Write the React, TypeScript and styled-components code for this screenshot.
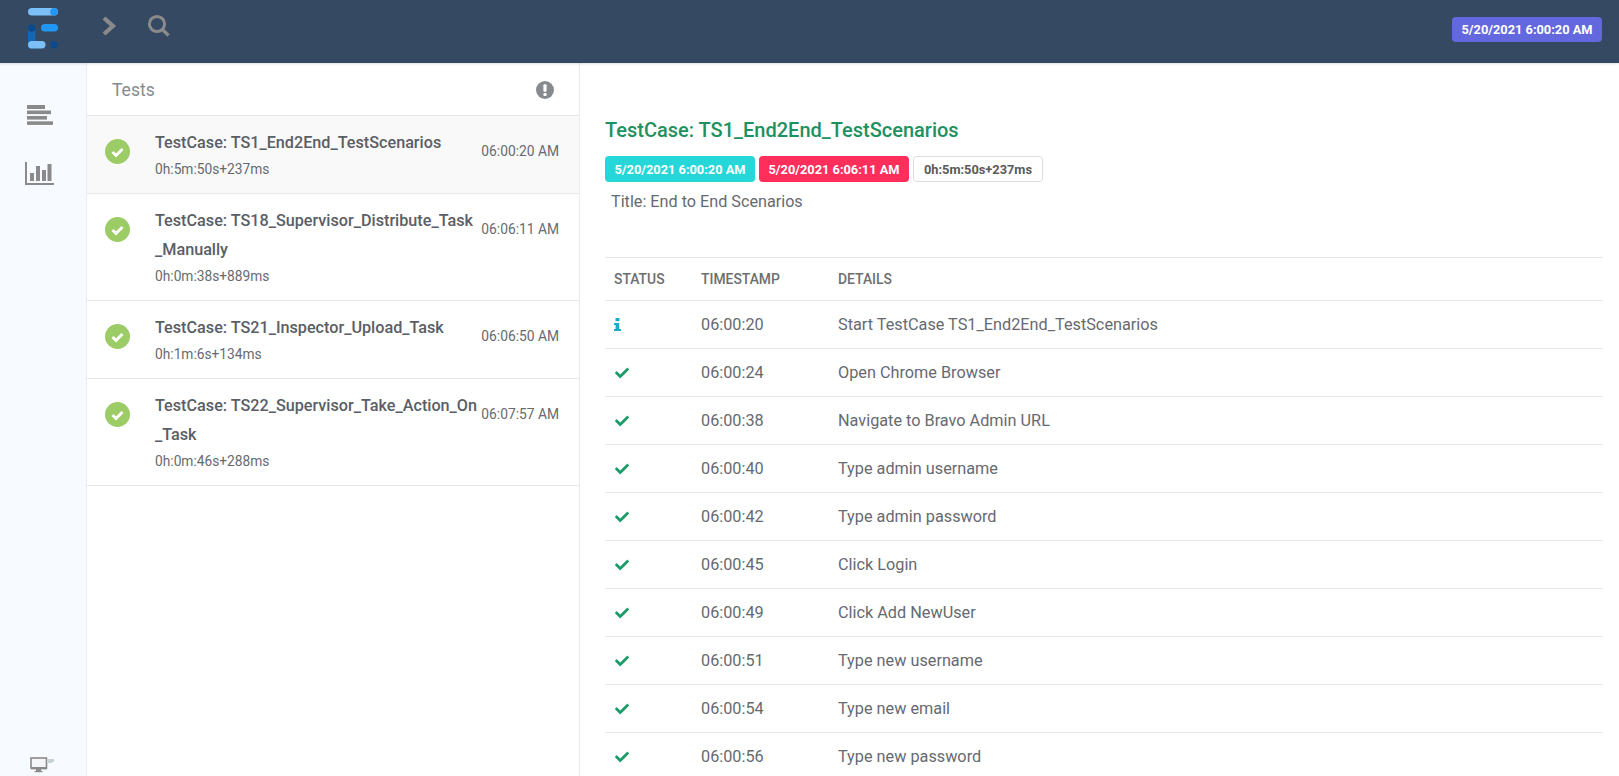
import React from 'react';
import styled, { createGlobalStyle } from 'styled-components';
import { FaCheck } from 'react-icons/fa';

const Global = createGlobalStyle`
  html, body { margin: 0; padding: 0; height: 100%; overflow: hidden; background: #fff; }
  body { font-family: Roboto, "Liberation Sans", sans-serif; color: #5a5a5a; font-size: 14px; }
  * { box-sizing: border-box; }
`;

const Page = styled.div`display: flex; flex-direction: column; height: 776px; overflow: hidden;`;
const TopBar = styled.header`
  height: 63px; flex: none; background: #354a62; display: flex; align-items: flex-start;
  box-shadow: 0 1px 2px rgba(0,0,0,.12); position: relative; z-index: 2;
`;
const LogoSlot = styled.div`width: 86px; padding: 8px 0 0 28px; flex: none;`;
const NavIcons = styled.div`display: flex; align-items: center; gap: 30px; padding: 14px 0 0 15px;`;
const Spacer = styled.div`flex: 1;`;
const DateBadge = styled.span`
  margin: 17px 17px 0 0; height: 25px; width: 150px; border-radius: 4px; background: #6368de; color: #fff;
  font-size: 12.8px; font-weight: 700; display: flex; align-items: center; justify-content: center;
`;
const Body = styled.div`display: flex; flex: 1; min-height: 0;`;
const SideNav = styled.nav`
  width: 87px; flex: none; background: #f7faff; border-right: 1px solid #e6ebf1;
  display: flex; flex-direction: column; align-items: center; padding: 42px 0 0 0;
`;
const SideItem = styled.div`height: 57px; width: 100%; padding-left: 27px; flex: none;`;
const ChartItem = styled(SideItem)`padding-left: 25px;`;
const SideBottom = styled.div`margin-top: auto; padding: 0 2px 0 0; height: 19px;`;
const ListPane = styled.section`width: 493px; flex: none; border-right: 1px solid #e6ebf1;`;
const ListHead = styled.div`
  height: 53px; border-bottom: 1px solid #e6e9ec; display: flex; align-items: center; justify-content: space-between;
  padding: 2px 25px 0 25px; color: #868a8e; font-size: 17.5px;
`;
const Row = styled.div<{ $active?: boolean; $h: number }>`
  display: flex; align-items: flex-start; border-bottom: 1px solid #e6e9ec; padding: 12px 20px 0 18px;
  height: ${p => p.$h}px; background: ${p => (p.$active ? '#f9f9f9' : '#fff')};
`;
const IconCell = styled.div`width: 50px; flex: none; padding-top: 11px; line-height: 0;`;
const Info = styled.div`flex: 1; min-width: 0;`;
const RowTitle = styled.div`font-size: 16.2px; font-weight: 500; line-height: 29px; color: #5a5e66; width: 324px; word-break: break-all;`;
const RowSub = styled.div`font-size: 13.75px; line-height: 20px; color: #666a70; margin-top: 2px;`;
const RowTime = styled.div`flex: none; font-size: 13.8px; line-height: 20px; color: #666a70; margin-top: 13px;`;
const Detail = styled.main`flex: 1; min-width: 0; padding: 54px 16px 0 25px;`;
const Heading = styled.h1`margin: 0; font-size: 20px; font-weight: 500; line-height: 26px; color: #1d9160;`;
const Badges = styled.div`display: flex; gap: 4px; margin-top: 13px;`;
const Badge = styled.span<{ $bg?: string }>`
  height: 26px; padding: 0 ${p => (p.$bg ? '9.5px' : '10px')}; border-radius: 4px; font-size: 12.8px; font-weight: 700;
  display: flex; align-items: center;
  background: ${p => p.$bg ?? '#fff'}; color: ${p => (p.$bg ? '#fff' : '#5a5a5a')};
  border: ${p => (p.$bg ? 'none' : '1px solid #ddd')};
`;
const SubTitle = styled.div`font-size: 16.2px; line-height: 20px; margin: 10px 0 0 6px; color: #666a70;`;
const Table = styled.div`margin-top: 45px; border-top: 1px solid #e6e9ec;`;
const Grid = styled.div<{ $head?: boolean }>`
  display: grid; grid-template-columns: 87px 137px 1fr; align-items: center; padding-left: 9px;
  height: ${p => (p.$head ? 43 : 48)}px; border-bottom: 1px solid #e6e9ec;
  font-size: ${p => (p.$head ? '13.9px' : '16.25px')}; font-weight: ${p => (p.$head ? 500 : 400)};
  color: ${p => (p.$head ? '#6e6e6e' : '#666a70')};
`;
const StatusIcon = styled.span`display: flex; align-items: center; color: #1d9c6c;`;
const PassTick = styled(FaCheck)`margin-left: 1px;`;

const Logo = () => (
  <svg width="32" height="42" viewBox="0 0 32 42">
    <rect x="0" y="0" width="30" height="7.5" rx="3.75" fill="#7dc0f8" />
    <circle cx="26" cy="3.75" r="3.75" fill="#2196f3" />
    <rect x="0" y="17" width="7.5" height="24" rx="3.75" fill="#1565b0" />
    <circle cx="3.75" cy="20" r="3.75" fill="#0d4a8c" />
    <rect x="13" y="16" width="17" height="7.5" rx="3.75" fill="#2196f3" />
    <rect x="0" y="33" width="17.5" height="7.5" rx="3.75" fill="#7dc0f8" />
    <circle cx="26" cy="36.7" r="3.75" fill="#0d4a8c" />
  </svg>
);
const Chevron = () => (
  <svg width="16" height="22" viewBox="0 0 16 22"><path d="M3 3l9 8-9 8" fill="none" stroke="#8a8a8a" strokeWidth="4.2" /></svg>
);
const Search = () => (
  <svg width="24" height="24" viewBox="0 0 24 24"><circle cx="10" cy="10" r="7.6" fill="none" stroke="#8a8a8a" strokeWidth="3" /><path d="M15.5 15.5l6 6" stroke="#8a8a8a" strokeWidth="3.4" /></svg>
);
const Bars = () => (
  <svg width="26" height="20" viewBox="0 0 26 20" fill="#8a8a8a">
    <rect y="0" width="18" height="4" /><rect y="5.5" width="24" height="3.6" /><rect y="11" width="20" height="3.6" /><rect y="16.3" width="26" height="3.6" />
  </svg>
);
const Chart = () => (
  <svg width="30" height="24" viewBox="0 0 30 24" fill="#8a8a8a">
    <rect x="0" y="0" width="2" height="23" /><rect x="0" y="21" width="29" height="2" />
    <rect x="5" y="11" width="4" height="8" /><rect x="11" y="4" width="4" height="15" /><rect x="17" y="8" width="4" height="11" /><rect x="22.5" y="2" width="4" height="17" />
  </svg>
);
const Monitor = () => (
  <svg width="24" height="17" viewBox="0 0 24 17">
    <rect x="1" y="1" width="15.5" height="10" fill="#f3f5f8" stroke="#8a8a8a" strokeWidth="1.6" />
    <rect x="1" y="10" width="16" height="2.4" fill="#8a8a8a" /><rect x="6" y="12" width="5" height="2.6" fill="#8a8a8a" /><rect x="4.5" y="14" width="8" height="1.2" fill="#8a8a8a" />
    <rect x="18.5" y="2" width="1" height="4" fill="#9aa" /><rect x="20.5" y="2" width="1" height="4" fill="#9aa" /><rect x="22.5" y="2" width="1" height="3" fill="#9aa" />
  </svg>
);
const Alert = () => (
  <svg width="18" height="18" viewBox="0 0 18 18"><circle cx="9" cy="9" r="9" fill="#868a8e" /><rect x="7.4" y="3.2" width="3.2" height="7.6" rx="1" fill="#fff" /><rect x="7.4" y="12" width="3.2" height="3" rx="1" fill="#fff" /></svg>
);
const PassCircle = () => (
  <svg width="25" height="25" viewBox="0 0 25 25"><circle cx="12.5" cy="12.5" r="12.5" fill="#9ccc65" /><path d="M7.5 13l3.5 3.5 6.5-6.5" fill="none" stroke="#fff" strokeWidth="3" /></svg>
);
const InfoGlyph = () => (
  <svg width="7" height="13" viewBox="0 0 7 13" fill="#18aecb"><rect x="1.5" y="0" width="4" height="3.2" /><path d="M0 5h5.2v6H7v2H0v-2h1.6V7H0z" /></svg>
);

const tests = [
  { t: 'TestCase: TS1_End2End_TestScenarios', d: '0h:5m:50s+237ms', at: '06:00:20 AM', h: 78, active: true },
  { t: 'TestCase: TS18_Supervisor_Distribute_Task_Manually', d: '0h:0m:38s+889ms', at: '06:06:11 AM', h: 107 },
  { t: 'TestCase: TS21_Inspector_Upload_Task', d: '0h:1m:6s+134ms', at: '06:06:50 AM', h: 78 },
  { t: 'TestCase: TS22_Supervisor_Take_Action_On_Task', d: '0h:0m:46s+288ms', at: '06:07:57 AM', h: 107 },
];
const logs = [
  ['06:00:20', 'Start TestCase TS1_End2End_TestScenarios', 'info'],
  ['06:00:24', 'Open Chrome Browser'],
  ['06:00:38', 'Navigate to Bravo Admin URL'],
  ['06:00:40', 'Type admin username'],
  ['06:00:42', 'Type admin password'],
  ['06:00:45', 'Click Login'],
  ['06:00:49', 'Click Add NewUser'],
  ['06:00:51', 'Type new username'],
  ['06:00:54', 'Type new email'],
  ['06:00:56', 'Type new password'],
];

export default function App() {
  return (
    <Page>
      <Global />
      <TopBar>
        <LogoSlot><Logo /></LogoSlot>
        <NavIcons><Chevron /><Search /></NavIcons>
        <Spacer />
        <DateBadge>5/20/2021 6:00:20 AM</DateBadge>
      </TopBar>
      <Body>
        <SideNav>
          <SideItem><Bars /></SideItem>
          <ChartItem><Chart /></ChartItem>
          <SideBottom><Monitor /></SideBottom>
        </SideNav>
        <ListPane>
          <ListHead>Tests<Alert /></ListHead>
          {tests.map(x => (
            <Row key={x.t} $active={x.active} $h={x.h}>
              <IconCell><PassCircle /></IconCell>
              <Info>
                <RowTitle>{x.t}</RowTitle>
                <RowSub>{x.d}</RowSub>
              </Info>
              <RowTime>{x.at}</RowTime>
            </Row>
          ))}
        </ListPane>
        <Detail>
          <Heading>TestCase: TS1_End2End_TestScenarios</Heading>
          <Badges>
            <Badge $bg="#26d7d9">5/20/2021 6:00:20 AM</Badge>
            <Badge $bg="#ff2e5b">5/20/2021 6:06:11 AM</Badge>
            <Badge>0h:5m:50s+237ms</Badge>
          </Badges>
          <SubTitle>Title: End to End Scenarios</SubTitle>
          <Table>
            <Grid $head><span>STATUS</span><span>TIMESTAMP</span><span>DETAILS</span></Grid>
            {logs.map(l => (
              <Grid key={l[0]}>
                <StatusIcon>{l[2] ? <InfoGlyph /> : <PassTick size={14} />}</StatusIcon>
                <span>{l[0]}</span>
                <span>{l[1]}</span>
              </Grid>
            ))}
          </Table>
        </Detail>
      </Body>
    </Page>
  );
}
